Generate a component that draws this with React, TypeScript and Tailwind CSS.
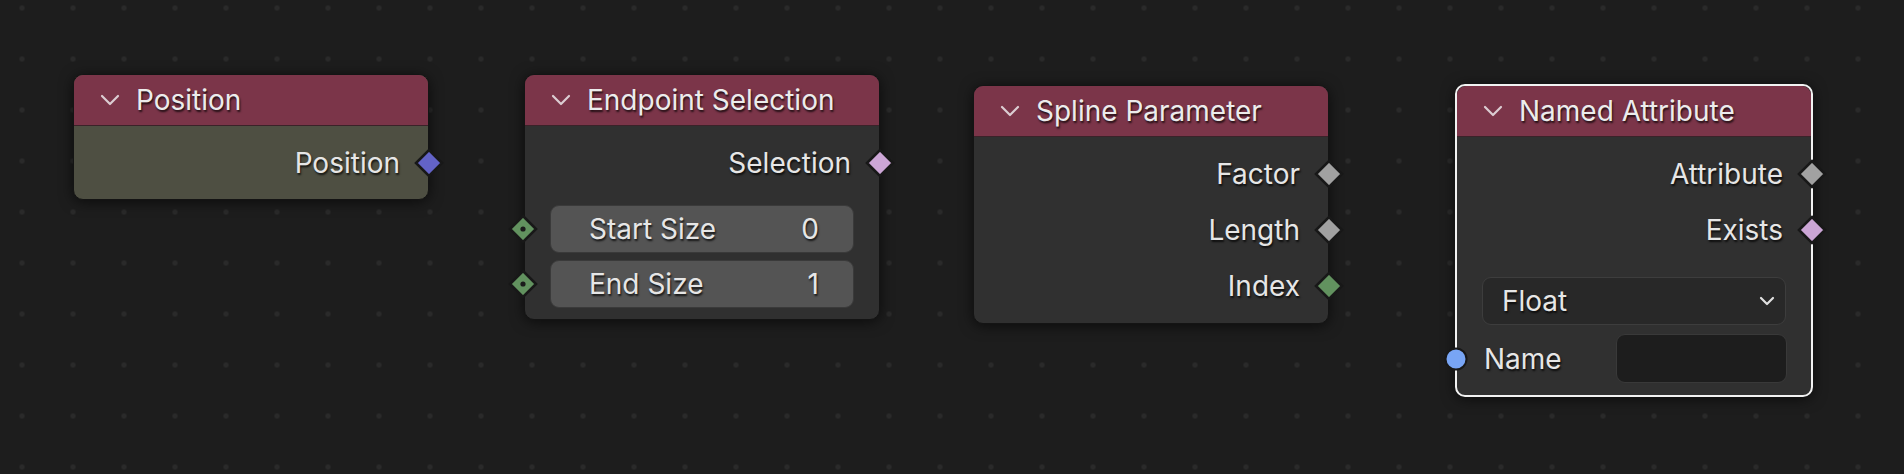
import type { ReactNode } from "react";

type SocketKind = "vector" | "bool" | "float" | "int" | "intIn" | "string";

const socketFill: Record<SocketKind, string> = {
  vector: "#6363c7",
  bool: "#cca6d6",
  float: "#a1a1a1",
  int: "#62925f",
  intIn: "#62925f",
  string: "#78a5f5",
};

function Socket({ kind }: { kind: SocketKind }) {
  if (kind === "string") {
    return (
      <svg width="28" height="28" viewBox="0 0 28 28">
        <circle cx="14" cy="14" r="10.5" fill={socketFill[kind]} stroke="#181818" strokeWidth="2" />
      </svg>
    );
  }
  return (
    <svg width="32" height="32" viewBox="0 0 32 32">
      <polygon points="16,3 29,16 16,29 3,16" fill={socketFill[kind]} stroke="#181818" strokeWidth="2.6" strokeLinejoin="miter" />
      {kind === "intIn" && <circle cx="16" cy="16" r="2.6" fill="#1b1b1b" />}
    </svg>
  );
}

function Chevron() {
  return (
    <svg width="20" height="12" viewBox="0 0 20 12">
      <path d="M2 2 L10 10 L18 2" fill="none" stroke="#dccdd2" strokeWidth="2.2" strokeLinecap="round" strokeLinejoin="round" />
    </svg>
  );
}

function OutRow({ label, kind }: { label: string; kind: SocketKind }) {
  return (
    <div className="relative h-[56px] flex items-center justify-end pr-[28px]">
      <span>{label}</span>
      <div className="absolute right-[-17px] top-1/2 -translate-y-1/2 flex">
        <Socket kind={kind} />
      </div>
    </div>
  );
}

function Node({
  pos,
  title,
  selected,
  body,
  children,
}: {
  pos: string;
  title: string;
  selected?: boolean;
  body?: string;
  children: ReactNode;
}) {
  return (
    <div
      className={`absolute ${pos} rounded-[10px] shadow-[0_2px_14px_rgba(0,0,0,0.6)] ${
        selected ? "w-[358px] border-2 border-[#f2f2f2]" : "w-[356px] border border-[#141414]"
      } ${body ?? "bg-[#303030]"}`}
    >
      <div className="h-[51px] rounded-t-[9px] bg-[#7b3549] border-b border-[#3b2229] flex items-center pl-[26px] gap-[16px]">
        <Chevron />
        <span className="text-[#ececec]">{title}</span>
      </div>
      <div className="pt-[9px]">{children}</div>
    </div>
  );
}

function NumField({ label, value }: { label: string; value: string }) {
  return (
    <div className="relative">
      <div className="absolute left-[-43px] top-1/2 -translate-y-1/2 flex">
        <Socket kind="intIn" />
      </div>
      <div className="h-[48px] rounded-[9px] bg-[#545454] border border-[#3a3a3a] flex items-center justify-between pl-[38px] pr-[34px]">
        <span>{label}</span>
        <span>{value}</span>
      </div>
    </div>
  );
}

export default function App() {
  return (
    <div className="relative w-[1904px] h-[474px] overflow-hidden bg-[#1d1d1d] bg-[radial-gradient(circle,#2a2a2a_2.3px,transparent_3px)] bg-[length:51px_51px] bg-[position:-3.5px_-17.5px] font-['Inter','Noto_Sans',sans-serif] text-[28px] leading-none text-[#e6e6e6] [text-shadow:1px_1.5px_2px_rgba(0,0,0,0.75)]">
      <Node pos="left-[73px] top-[74px]" title="Position" body="bg-[#4e4f42]">
        <div className="pb-[8px]">
          <OutRow label="Position" kind="vector" />
        </div>
      </Node>

      <Node pos="left-[524px] top-[74px]" title="Endpoint Selection">
        <div className="pb-[11px]">
          <OutRow label="Selection" kind="bool" />
          <div className="mt-[14px] px-[25px] flex flex-col gap-[7px]">
            <NumField label="Start Size" value="0" />
            <NumField label="End Size" value="1" />
          </div>
        </div>
      </Node>

      <Node pos="left-[973px] top-[85px]" title="Spline Parameter">
        <div className="pb-[9px]">
          <OutRow label="Factor" kind="float" />
          <OutRow label="Length" kind="float" />
          <OutRow label="Index" kind="int" />
        </div>
      </Node>

      <Node pos="left-[1455px] top-[84px]" title="Named Attribute" selected>
        <div className="pb-[12px]">
          <OutRow label="Attribute" kind="float" />
          <OutRow label="Exists" kind="bool" />
          <div className="mt-[19px] mx-[25px] h-[48px] rounded-[9px] bg-[#282828] border border-[#3d3d3d] flex items-center justify-between pl-[19px] pr-[9px]">
            <span>Float</span>
            <svg width="18" height="12" viewBox="0 0 18 12">
              <path d="M3 3 L9 9 L15 3" fill="none" stroke="#e0e0e0" strokeWidth="2.2" strokeLinecap="round" strokeLinejoin="round" />
            </svg>
          </div>
          <div className="relative mt-[9px] h-[49px] flex items-center pl-[27px] pr-[24px]">
            <div className="absolute left-[-15px] top-1/2 -translate-y-1/2 flex">
              <Socket kind="string" />
            </div>
            <span>Name</span>
            <div className="ml-auto w-[171px] h-[49px] rounded-[9px] bg-[#1d1d1d] border border-[#393939]" />
          </div>
        </div>
      </Node>
    </div>
  );
}
